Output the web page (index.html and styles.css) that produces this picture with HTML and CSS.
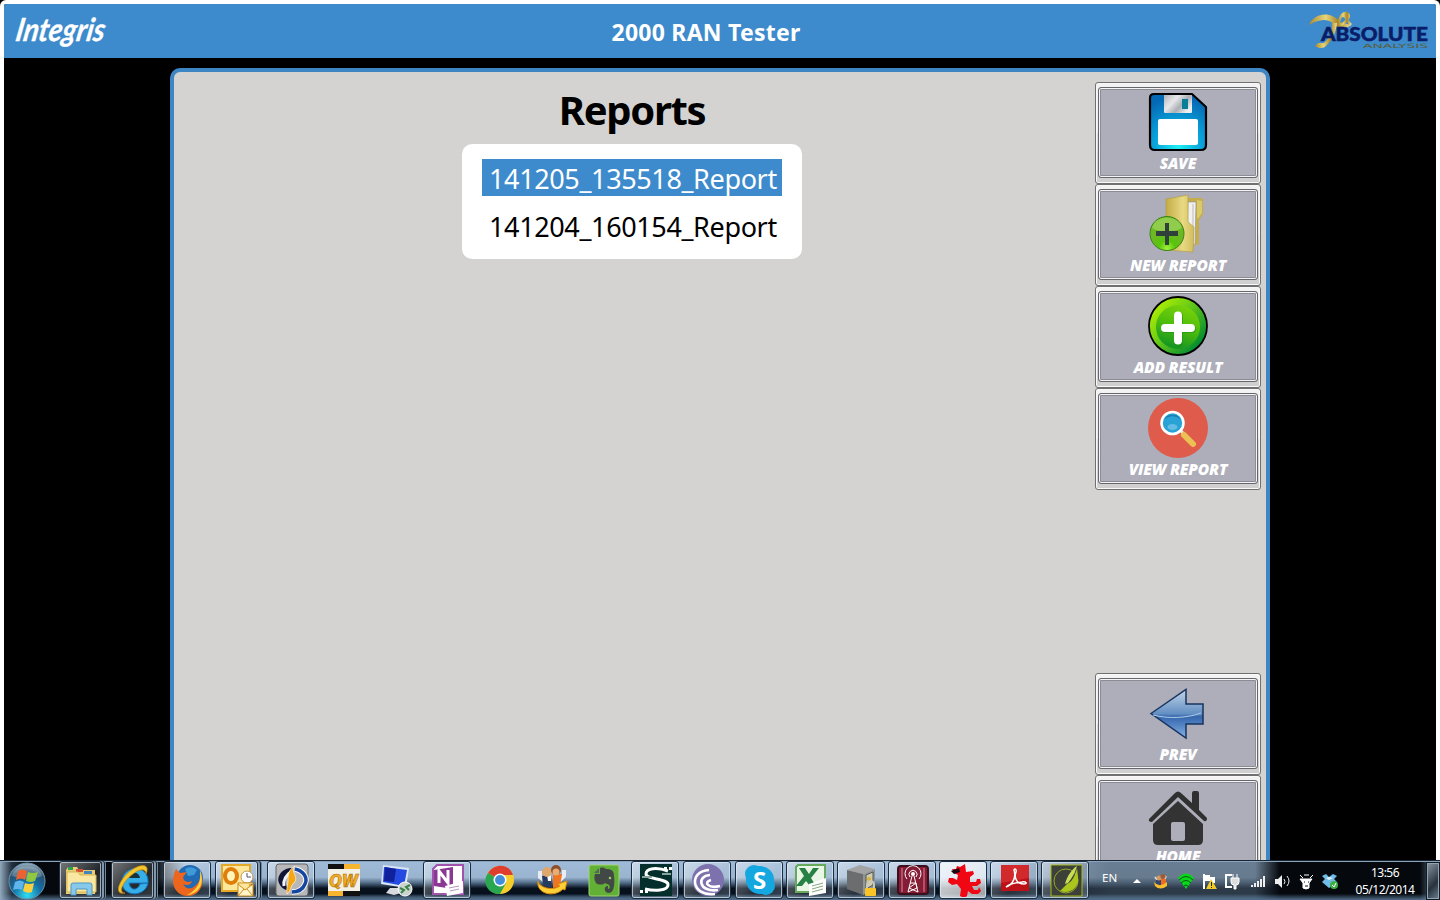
FILE: index.html
```html
<!DOCTYPE html>
<html lang="en">
<head>
<meta charset="utf-8">
<title>2000 RAN Tester</title>
<link rel="stylesheet" href="styles.css">
</head>
<body>
<div class="desktop">
<div class="app">
  <header class="header">
    <svg class="brand" width="120" height="54" viewBox="0 0 120 54"><text x="10" y="37" textLength="89" lengthAdjust="spacingAndGlyphs" transform="translate(7 0) skewX(-10)">Integris</text></svg>
    <h1 class="app-title">2000 RAN Tester</h1>
    <svg class="logo" width="122" height="42" viewBox="0 0 122 42">
      <defs><linearGradient id="gold"><stop offset="0" stop-color="#a98a2c"/><stop offset=".4" stop-color="#e6d47c"/><stop offset=".7" stop-color="#a88423"/><stop offset="1" stop-color="#efe09a"/></linearGradient></defs>
      <path d="M1 14C6 1 24 0 32 11l11 3c-6 5-13 4-17-1C19 6 9 9 1 14z" fill="url(#gold)"/>
      <path d="M31 14c-1-6 3-12 7-12 4 1 3 5 0 8-3 4-6 4-8 3M36 2c1 4 3 8 7 12M33 5l9 0" fill="none" stroke="url(#gold)" stroke-width="2.6"/>
      <path d="M29 12c-1 9-4 17-12 24-3 2-7 1-10-1l3-3h6c6-5 8-12 8-20z" fill="url(#gold)"/>
      <text class="logo-main" x="13" y="29.500" textLength="107" lengthAdjust="spacingAndGlyphs">ABSOLUTE</text>
      <text class="logo-sub" x="55" y="36.500" textLength="65" lengthAdjust="spacingAndGlyphs">ANALYSIS</text>
    </svg>
  </header>

  <main class="panel">
    <section class="content">
      <h2 class="page-title">Reports</h2>
      <ul class="report-list">
        <li class="report selected">141205_135518_Report</li>
        <li class="report">141204_160154_Report</li>
      </ul>
    </section>
    <nav class="sidebar">
      <div class="group">
        <button class="tool"><span class="tool-face">
          <svg width="60" height="60" viewBox="0 0 60 60">
            <defs><radialGradient id="disk" cx=".5" cy=".95" r=".9"><stop offset="0" stop-color="#1ff0f5"/><stop offset=".45" stop-color="#0aa5dc"/><stop offset="1" stop-color="#0568b4"/></radialGradient><linearGradient id="metal" x2="1" y2=".6"><stop offset="0" stop-color="#aeb4ba"/><stop offset=".4" stop-color="#e8e8ea"/><stop offset=".7" stop-color="#aaafb6"/><stop offset="1" stop-color="#eee"/></linearGradient></defs>
            <path d="M6 2h38l14 13v38q0 5-5 5H7q-5 0-5-5V6q0-4 4-4z" fill="url(#disk)" stroke="#000" stroke-width="2.200" stroke-linejoin="round"/>
            <path d="M16 3h28v17q0 1-1 1H17q-1 0-1-1z" fill="url(#metal)"/><path d="M34 7h6v10h-6z" fill="#087f96"/>
            <rect x="10" y="27" width="40" height="26" rx="2" fill="#fff"/>
          </svg><span class="label">SAVE</span></span></button>
        <button class="tool"><span class="tool-face">
          <svg width="60" height="60" viewBox="0 0 60 60">
            <defs><linearGradient id="folder" x2="1"><stop offset="0" stop-color="#c3ac45"/><stop offset=".6" stop-color="#e8d983"/><stop offset="1" stop-color="#d2bc5b"/></linearGradient><radialGradient id="lime" cy=".95"><stop offset="0" stop-color="#a5f43c"/><stop offset=".5" stop-color="#57c50a"/><stop offset="1" stop-color="#6cb824"/></radialGradient></defs>
            <path d="M38 4l15 0q2 0 2 3v13l-4 6v24l-12 4z" fill="#c5ad4b"/><path d="M40 8l8 0-1 42-8 4z" fill="#f1f1f0" stroke="#999" stroke-width=".7"/><path d="M45 10v40" stroke="#bbb"/><path d="M49 6l5 1v12l-4 6-1-2z" fill="#dcc968"/>
            <path d="M18 5l22-4v27l6 5-1 25-27-2z" fill="url(#folder)" stroke="#af983c" stroke-width=".6"/>
            <circle cx="19" cy="39.500" r="17" fill="url(#lime)" stroke="#398316"/><path d="M4 34c3-14 27-14 30 0-10 5-20 5-30 0z" fill="#c7ed8c" opacity=".4"/>
            <path d="M17 29h4v8h9v5h-9v9h-4v-9H8v-5h9z" fill="#30403a"/>
          </svg><span class="label">NEW REPORT</span></span></button>
        <button class="tool"><span class="tool-face">
          <svg width="60" height="60" viewBox="0 0 60 60">
            <defs><linearGradient id="green" x2=".9" y2=".8"><stop offset="0" stop-color="#c9fb00"/><stop offset=".45" stop-color="#76d212"/><stop offset="1" stop-color="#008b32"/></linearGradient><linearGradient id="green2" x1=".7" x2=".4" y2="1"><stop offset="0" stop-color="#7bd30a"/><stop offset=".5" stop-color="#4dbc0c"/><stop offset="1" stop-color="#129323"/></linearGradient></defs>
            <circle cx="30" cy="30" r="29" fill="url(#green)" stroke="#000" stroke-width="1.800"/><circle cx="30" cy="31" r="22" fill="url(#green2)"/><path d="M30 19v27M17 32h26" stroke="#158b18" opacity=".5" stroke-width="8" stroke-linecap="round" transform="translate(1 1)"/><path d="M30 19.500v25M17 32h26" stroke="#fff" stroke-width="8" stroke-linecap="round"/>
          </svg><span class="label">ADD RESULT</span></span></button>
        <button class="tool"><span class="tool-face">
          <svg width="60" height="60" viewBox="0 0 60 60">
            <circle cx="30" cy="30" r="30" fill="#df5b4b"/><path d="M32 32l5 5" stroke="#e8e8e8" stroke-width="3"/><path d="M36 37l9 9" stroke="#ecc153" stroke-width="6" stroke-linecap="round"/>
            <circle cx="24.500" cy="25" r="11" fill="#29a3d6" stroke="#fff" stroke-width="2.600"/><path d="M16 22a9 8 0 0117 0c-5-5-12-5-17 0" fill="#177fb2"/><ellipse cx="24.500" cy="29" rx="5" ry="3" fill="#64bce2"/>
          </svg><span class="label">VIEW REPORT</span></span></button>
      </div>
      <div class="group">
        <button class="tool"><span class="tool-face">
          <svg width="60" height="60" viewBox="0 -5 60 60">
            <defs><linearGradient id="arrow" x2="0" y2="1"><stop offset="0" stop-color="#c3d5e7"/><stop offset=".5" stop-color="#638fc3"/><stop offset=".56" stop-color="#3566ad"/><stop offset="1" stop-color="#84b0e4"/></linearGradient></defs>
            <path d="M3 25.500L38 1.500v14.500h17v20H38v14z" fill="url(#arrow)" stroke="#17345f" stroke-width="1.500"/><path d="M5 27c15 4 35 3 48-2" fill="none" stroke="#b2cce7"/>
          </svg><span class="label">PREV</span></span></button>
        <button class="tool"><span class="tool-face">
          <svg width="60" height="60" viewBox="0 -5 60 60">
            <path d="M1 29L27 3c2-2 4-2 6 0l11 10V3q0-2 2-2h3q2 0 2 2v17l8 8q0 4-3 3L30 7 4 32q-4 0-3-3z" fill="#303030"/><path fill-rule="evenodd" d="M5 34L30 11l25 23v16q0 5-5 5H10q-5 0-5-5zM25 32q-2 0-2 2v15q0 2 2 2h10q2 0 2-2V34q0-2-2-2z" fill="#333"/>
          </svg><span class="label">HOME</span></span></button>
      </div>
    </nav>
  </main>
</div>

<footer class="taskbar">
  <svg class="orb" width="38" height="38" viewBox="0 0 38 38">
    <defs><radialGradient id="orb" cy=".9" r=".9"><stop offset="0" stop-color="#32ddf2"/><stop offset=".45" stop-color="#126ea5"/><stop offset=".75" stop-color="#28506f"/><stop offset="1" stop-color="#9eb6c5"/></radialGradient></defs>
    <circle cx="19" cy="19" r="18" fill="url(#orb)" stroke="#6c92ab"/><path d="M4 14C7 1 31 1 34 14 25 18 14 17 4 14z" fill="#fff" opacity=".25"/>
    <path d="M10 9q4-3 9 0l-2 9q-4-3-9 0z" fill="#ea6331"/><path d="M20 10q4 2 10 0l-3 9q-4 2-9 0z" fill="#8fc73e"/><path d="M7 20q5-3 9 0l-2 8q-4-2-9 0z" fill="#60b5ec"/><path d="M17 21q4 2 9 0l-2 9q-4 2-9-1z" fill="#fbcf3d"/>
  </svg>
  <div class="tasks">
    <span class="task open stacked"><svg width="34" height="34" viewBox="0 0 34 34"><path d="M2 7l2-3h9l2 3h16v24H2z" fill="#e9cd72"/><path d="M4 4h5v3H4z" fill="#2da34c"/><path d="M12 6h7v3h-7z" fill="#d85036"/><path d="M20 8h8v3h-8z" fill="#4384bd"/><path d="M3 9h11l2 3h16v17H3z" fill="#f9e7a2" stroke="#d5b755"/><path d="M7 32V22q0-2 2-2h17q2 0 2 2v10h-5v-6H12v6z" fill="#87c9ea" stroke="#4e99c4"/></svg></span>
    <span class="task open stacked"><svg width="34" height="34" viewBox="0 0 34 34"><path d="M32 20c-3 15-26 14-26-1C6 2 33 0 32 20H13c1 8 9 8 11 1z" fill="#36aee8" stroke="#1479c2"/><path d="M13 15h11c-1-7-10-7-11 0z" fill="#17323d"/><path d="M9 30C-4 33 4 14 17 6 27 0 34 2 30 11c0-6-7-5-13 0C8 17 1 30 9 30z" fill="#f5c52e" stroke="#ba8610" stroke-width=".7"/></svg></span>
    <span class="task open"><svg width="34" height="34" viewBox="0 0 34 34"><circle cx="19" cy="15" r="13" fill="#236ab4"/><path d="M14 6q6-4 12 1l-3 5-6 1z" fill="#3d9bd8"/><path d="M5 6l4 4 7-1-4 5q1 7 9 4-2 6-9 3 5 8 12 2 7-6 5-14c6 11 0 24-12 24C4 33-2 20 5 6z" fill="#ec671d"/><path d="M29 7c5 12 0 24-13 25 12-6 14-14 13-25z" fill="#ffd13e"/></svg></span>
    <span class="task open stacked"><svg width="34" height="34" viewBox="0 0 34 34"><path d="M2 2h28v26H2z" fill="#fce79b" stroke="#e5a927" stroke-width="2"/><ellipse cx="11" cy="13" rx="6" ry="7" fill="#fff5bb" stroke="#df7e0b" stroke-width="4"/><circle cx="27" cy="14" r="6" fill="#fff" stroke="#bd9a54"/><path d="M27 10v4h4" fill="none" stroke="#556"/><path d="M18 20h15v13H18zM18 21l7 6 8-6M18 33l6-7m9 7l-6-7" fill="#fff4ca" stroke="#ce8b18"/></svg></span>
    <span class="task open"><svg width="34" height="34" viewBox="0 0 34 34"><rect x="1" y="1" width="32" height="32" rx="3" fill="#b8b8ba" stroke="#666"/><path d="M18 5C8 4 1 13 4 20c2 5 6 7 10 8 -5-8-5-15 4-23z" fill="#101536"/><path d="M17 8c-6 4-9 9-8 15" fill="none" stroke="#f4f4f4" stroke-width="3"/><path d="M20 6c9 2 13 9 10 15-2 5-7 8-13 8" fill="none" stroke="#fff" stroke-width="5.500"/><path d="M20 6c9 2 13 9 10 15-2 5-7 8-13 8" fill="none" stroke="#1547a0" stroke-width="3.500"/><path d="M20 3c-6 5 5 11-1 17-4 3-2 7-7 11-1-6 1-9 1-13 0-7 1-12 7-15z" fill="#f5a613" stroke="#fff" stroke-width=".6"/></svg></span>
    <span class="task"><svg width="34" height="34" viewBox="0 0 34 34"><path d="M1 1h32v32H1z" fill="#f3f0e6"/><path d="M1 1h16v5H1zM16 28h17v5H16z" fill="#111"/><path d="M17 1h16v5H17zM1 28h15v5H1z" fill="#f8b52d"/><text class="qw" x="2" y="24" textLength="29" lengthAdjust="spacingAndGlyphs">QW</text></svg></span>
    <span class="task"><svg width="34" height="34" viewBox="0 0 34 34"><path d="M4 2l26 3-3 20L2 21z" fill="#d9e5f5"/><path d="M5 4l23 3-3 16L4 19z" fill="#244ae1"/><path d="M6 4l11 2-2 13-10-1z" fill="#11219b"/><path d="M11 25h9l2 5-7 2-8-2z" fill="#d8d9df"/><circle cx="26" cy="26" r="7" fill="#ccd3cf" stroke="#fff"/><path d="M21 25l4 2-3 3m9-8l-4 2 3 3" fill="none" stroke="#388347" stroke-width="2"/></svg></span>
    <span class="task open"><svg width="34" height="34" viewBox="0 0 34 34"><path d="M6 2h26v29H2V6z" fill="#fff" stroke="#9f53aa" stroke-width="2"/><path d="M3 7l19-3v22L3 23z" fill="#8a3894"/><path d="M8 20V8l9 12V7" fill="none" stroke="#fff" stroke-width="3"/><path d="M14 23l18-5v12l-16 3z" fill="#fff"/><path d="M18 25l10-2m-9 5l9-2" stroke="#b896bc"/></svg></span>
    <span class="task"><svg width="34" height="34" viewBox="0 0 34 34"><circle cx="17" cy="17" r="14" fill="#f6ce2c"/><path d="M17 17L5 10c7-11 22-9 25 2H17z" fill="#df3d2e"/><path d="M5 10c-7 10 1 22 12 21l6-11-6-3z" fill="#2ba650"/><circle cx="17" cy="17" r="6.500" fill="#fff"/><circle cx="17" cy="17" r="5" fill="#438edb"/></svg></span>
    <span class="task"><svg width="34" height="34" viewBox="0 0 34 34"><path d="M5 8v6l5 4M29 7v6l-5 5" fill="none" stroke="#e9edf2" stroke-width="4"/><path d="M7 13l9-2 1 14-9-2z" fill="#263b60"/><path d="M18 11l9 0-2 13-7 1z" fill="#f07523"/><path d="M12 12h4v6h-3z" fill="#fff"/><circle cx="12" cy="9" r="5" fill="#dfa76b"/><circle cx="21" cy="7" r="5" fill="#8d4e2b"/><circle cx="21" cy="9" r="3.500" fill="#e7ad75"/><path d="M3 18c1 7 15 10 22 5l-2-2 9-3-2 9-2-1c-9 9-27 5-25-8z" fill="#ffcf37" stroke="#d98b09"/></svg></span>
    <span class="task"><svg width="34" height="34" viewBox="0 0 34 34"><rect x="2" y="2" width="30" height="31" rx="2" fill="#62b035" stroke="#a2d577"/><path d="M8 11h5V5c3-1 5 0 6 1 5 0 8 1 8 7 1 8 0 17-5 17s-6-7-1-7v3c3 0 2-5-1-5l-2-1c-2 2-7 2-9 0-2-3-2-6-1-9z" fill="#424846"/><path d="M7 10l5-5v5z" fill="#596360"/><circle cx="23" cy="15" r="1.300" fill="#9bc66a"/></svg></span>
    <span class="task open"><svg width="34" height="34" viewBox="0 0 34 34"><path d="M1 1h32v32H1z" fill="#042e2b"/><path d="M29 8C18 4 7 5 7 11c0 6 23 4 22 11 0 6-14 6-23 4" fill="none" stroke="#fff" stroke-width="3"/><path d="M3 14h10m10-3h9" stroke="#86a39e" stroke-width="2"/><path d="M25 4h3v3h-3zm5 0h3v3h-3zM1 27h3v3H1zm5 0h3v3H6z" fill="#fff"/></svg></span>
    <span class="task open"><svg width="34" height="34" viewBox="0 0 34 34"><circle cx="17" cy="17" r="16" fill="#7e72ae"/><g fill="none" stroke="#fff" stroke-width="2.600"><path d="M18 7C-3 8 0 34 24 31"/><path d="M19 12C5 13 8 30 27 27"/><path d="M20 17c-8 2-3 9 9 6"/></g></svg></span>
    <span class="task open w51"><svg width="34" height="34" viewBox="0 0 34 34"><circle cx="11" cy="11" r="9" fill="#15a7e0"/><circle cx="17" cy="17" r="14" fill="#15a7e0"/><circle cx="23" cy="23" r="9" fill="#15a7e0"/><text class="skype" x="10" y="26">S</text></svg></span>
    <span class="task open w51"><svg width="34" height="34" viewBox="0 0 34 34"><path d="M4 2h27v27H2V4z" fill="#e9f5e5" stroke="#64a95c" stroke-width="2"/><path d="M5 5h6l4 6 4-6h6l-8 10 5 8h-6l-4-5-4 5H2l8-10z" fill="#278044"/><path d="M15 21l17-6v15l-17 3z" fill="#fff"/><path d="M18 23l11-3m-11 6l11-3m-11 6l11-3" stroke="#83aa80"/></svg></span>
    <span class="task open w51"><svg width="34" height="34" viewBox="0 0 34 34"><path d="M2 7l13-5 15 4-12 5z" fill="#a3a3a3"/><path d="M2 7l16 4v21L2 26z" fill="#6c6d6e"/><path d="M18 11l12-5v20l-12 6z" fill="#929596"/><path d="M21 12l7-3v13l-7 4z" fill="#d0ccae" stroke="#555"/><circle cx="24" cy="16" r="2" fill="#d9b334"/><path d="M22 25v-3c0-5 7-5 7 0v3" fill="none" stroke="#c9c9b9" stroke-width="2"/><rect x="20" y="25" width="11" height="8" rx="1" fill="#fac425"/></svg></span>
    <span class="task open w51"><svg width="34" height="34" viewBox="0 0 34 34"><rect x="2" y="3" width="30" height="28" rx="3" fill="#851c35" stroke="#3d0e1b" stroke-width="2"/><path d="M6 5v24M28 5v24" stroke="#b24f69" stroke-width="2"/><g fill="none" stroke="#fff"><path d="M16 13l-4 16m6-16l4 16M14 20h6l-7 5 9 4m-2-9l1 5-9 4M14 14a4 4 0 116 0M11 16a8 8 0 1112 0"/></g><circle cx="17" cy="11" r="2" fill="#fff"/></svg></span>
    <span class="task open active w51"><svg width="34" height="34" viewBox="0 0 34 34"><path d="M9 6l1-3 3 1 5-3 1 8 7-1 1 3-4 3v5l6 0 1-3 3 0 1 4-4 3-5 0 2 4 4 0 1-3 2 4-3 3-6 0-4-3-1 5-3 2-4-2 1-7-4-5-5 1-4-3 1-4 4 0 4 2 1-5-4-2-2-4z" fill="#f00713"/><path d="M4 8l8-3 1 4-6 2z" fill="#180a14"/></svg></span>
    <span class="task open w51"><svg width="34" height="34" viewBox="0 0 34 34"><path d="M3 2h28v26H3z" fill="#bc1117"/><path d="M3 2h28v13L3 20z" fill="#d22a2c"/><path d="M8 24c8-3 10-11 8-17 0-2 3-1 2 2-2 5 0 12 8 12 4 0 2-3-2-2-8 1-14 3-16 5z" fill="none" stroke="#fff" stroke-width="1.500"/></svg></span>
    <span class="task open w51"><svg width="34" height="34" viewBox="0 0 34 34"><path d="M2 2h31v31H2z" fill="#3c4039" stroke="#a5b91d"/><circle cx="17" cy="18" r="12" fill="none" stroke="#93a82a"/><path d="M29 14c2 10-8 18-18 14l7-7c5-2 8-8 10-16z" fill="#acc51c"/><path d="M28 3c-5 3-10 10-12 18l3-1c4-5 7-10 9-17z" fill="#cbdc56"/></svg></span>
  </div>
  <div class="tray">
    <span class="lang">EN</span>
    <svg class="tray-icons" width="210" height="20" viewBox="0 0 210 20">
      <path d="M5 12l4-4 4 4z" fill="#fff"/>
      <path d="M27 6l4 5m7-6l-3 6" stroke="#ddd" stroke-width="2"/><path d="M28 9h5v5h-5z" fill="#34466c"/><path d="M33 8h5v6h-5z" fill="#ec6c25"/><circle cx="31" cy="7" r="2.500" fill="#d09a65"/><circle cx="35" cy="5.500" r="2.500" fill="#a05d34"/><path d="M26 11q4 5 10 2l3-2v4q-7 5-12 0z" fill="#f9bd2b"/>
      <path d="M50 7q8-9 16 0l-8 11z" fill="#08d71b"/><path d="M51 9q7-7 14 0m-12 3q5-5 10 0m-7 3q2-2 4 0" fill="none" stroke="#075513"/>
      <path d="M76 3v15" stroke="#fff" stroke-width="2"/><path d="M77 4h5v2h5v6h-5v-2h-5z" fill="#fff"/><path d="M78 18l5-10 6 10z" fill="#f1cb26"/><path d="M83.500 11v4m0 1v1" stroke="#222"/>
      <path d="M104 4h-6v12h6" fill="none" stroke="#fff" stroke-width="2"/><path d="M103 7h8v4q0 3-3 3v4h-2v-4q-3 0-3-3zM105 3v4m4-4v4" fill="#ddd" stroke="#fff"/>
      <path d="M124 16v-2m3 2v-4m3 4v-6m3 6V8m3 8V5" stroke="#eee" stroke-width="2"/>
      <path d="M147 8h3l4-4v13l-4-4h-3z" fill="#eee"/><path d="M156 8q2 3 0 5m3-8q4 5 0 10" fill="none" stroke="#eee"/>
      <path d="M172 8h12l-3 4v5q-3 2-6 0v-5zM172 4l3 3m10-3l-3 3M176 4h5" fill="#fff" stroke="#fff"/><path d="M176 11h1m3 0h1M177 15h3" stroke="#111"/>
      <path d="M194 5l4-2 3 3 4-3 4 2-3 3 3 3-8 6-7-6 3-3z" fill="#70bce9"/><path d="M198 7l3 2 4-2-4-1z" fill="#e6f5ff"/><circle cx="206" cy="14" r="4" fill="#3fae49"/><path d="M204 14l2 2 2-4" fill="none" stroke="#fff"/>
    </svg>
    <div class="clock"><span>13:56</span><span>05/12/2014</span></div>
  </div>
  <span class="show-desktop"></span>
</footer>
</div>
</body>
</html>
```
FILE: styles.css
```css
* { box-sizing: border-box; }
body { margin: 0; background: #000; font-family: "Noto Sans", "Open Sans", sans-serif; overflow: hidden; }
.desktop { width: 1440px; height: 900px; overflow: hidden; display: grid; grid-template-rows: 860px 40px; }
.app { border: 4px solid #fff; border-bottom: 0; border-radius: 6px 6px 0 0; background: #000; overflow: hidden; }
.header { height: 54px; background: #3d8bcc; display: grid; grid-template-columns: 170px 1fr 170px; align-items: center; }
.brand { overflow: visible; }
.brand text { font: italic 700 32px Lato, sans-serif; fill: #fff; stroke: #fff; stroke-width: .3px; }
.app-title { margin: 0; text-align: center; padding-right: 28px; color: #fff; font: 700 23px/30px "Noto Sans", sans-serif; letter-spacing: .25px; padding-top: 2px; }
.logo { justify-self: end; margin: 1px 6px 0 0; overflow: visible; }
.logo-main { font: 900 19px "Lato", sans-serif; fill: #0a1d68; stroke: #0a1d68; stroke-width: .5px; }
.logo-sub { font: 400 6px "DejaVu Sans", sans-serif; fill: #5b5c30; }
.panel { width: 1100px; height: 850px; margin: 10px auto 0; border: 4px solid #3d86c3; border-radius: 10px; background: #d4d3d1; display: flex; }
.content { width: 916px; display: flex; flex-direction: column; align-items: center; padding-top: 11px; }
.page-title { margin: 0; font: 700 40px/54px "Noto Sans", sans-serif; letter-spacing: -1.3px; }
.report-list { list-style: none; margin: 7px 0 0; padding: 15px 20px; width: 340px; height: 115px; border-radius: 10px; background: #fff; display: flex; flex-direction: column; gap: 11px; }
.report { height: 37px; padding-left: 7px; font-size: 27px; line-height: 40px; letter-spacing: -.37px; white-space: nowrap; }
.selected { background: #3d8bcc; color: #fff; }
.sidebar { width: 166px; margin-left: 5px; padding-top: 10px; display: flex; flex-direction: column; gap: 183px; }
.group { display: flex; flex-direction: column; }
.tool { width: 166px; height: 102px; padding: 4px 2px 5px; border: 1px solid #707070; border-radius: 3px; background: linear-gradient(#f3f3f3 0%, #ebebeb 50%, #ddd 50%, #cfcfcf 100%); box-shadow: inset 0 0 0 1px #f8f8f8; display: flex; }
.tool-face { flex: 1; border: 1px solid #66666c; border-radius: 3px; box-shadow: inset 0 0 0 1px #f4f4f4, inset 0 0 0 2px #8b8b94; background: #aeaeba; display: flex; flex-direction: column; align-items: center; padding-top: 4px; }
.tool-face svg { display: block; }
.label { margin-top: 0; font: italic 800 15.5px/22px "Open Sans", sans-serif; letter-spacing: -.2px; color: #fff; white-space: nowrap; }
.taskbar { display: flex; align-items: center; border-top: 1px solid #172434; box-shadow: inset 0 1px #8da5bb;
  background: linear-gradient(90deg, #91a9bd 0, rgba(60,85,108,.5) 12px, transparent 28px, transparent 1420px, #7994aa 1440px), linear-gradient(transparent 84%, #506d89 100%), linear-gradient(90deg, #05090e 0, #05090e 155px, transparent 185px, transparent 1255px, #05090e 1280px), linear-gradient(90deg, transparent 1000px, rgba(70,85,100,.6) 1110px), linear-gradient(#9fbbd9 0, #9ab4cf 42%, #56718c 55%, #07111e 70%, #07111e 85%, #506d89 100%); }
.orb { margin: 0 0 0 8px; }
.tasks { margin-left: 13px; display: flex; height: 40px; }
.task { width: 48px; height: 38px; margin: 0 4px 0 0; padding-left: 2px; border: 1px solid transparent; border-radius: 3px; display: flex; align-items: center; justify-content: center; }
.task.w51 { margin-right: 3px; }
.open { border-color: #1c2d40; box-shadow: inset 0 0 0 1px rgba(225,236,247,.65); background: linear-gradient(135deg, rgba(255,255,255,.45), rgba(255,255,255,.12) 60%, rgba(190,215,240,.25)); }
.stacked { width: 43px; margin-right: 9px; padding-left: 0; box-shadow: inset 0 0 0 1px rgba(225,236,247,.65), 2px 0 #8296a9, 3px 0 #16202c, 4px 0 #70869a; }
.active { background: linear-gradient(135deg, rgba(255,255,255,.85), rgba(255,255,255,.6)); }
.qw { font: italic 900 19px Roboto, sans-serif; fill: #f3ac23; stroke: #a66d12; stroke-width: .5px; }
.skype { font: 700 24px "Open Sans", sans-serif; fill: #fff; }
.tray { margin-left: 10px; display: flex; align-items: center; color: #fff; }
.lang { width: 16px; font-size: 11.5px; line-height: 16px; margin-top: -6px; }
.tray-icons { margin-left: 10px; }
.clock { width: 80px; margin-left: 7px; display: flex; flex-direction: column; align-items: center; font-size: 12px; line-height: 17px; letter-spacing: -.5px; }
.show-desktop { width: 14px; height: 38px; margin-left: auto; border: 1px solid #101b26; box-shadow: inset 0 0 0 1px #91a2b0; background: linear-gradient(135deg, #8a98a5, #27323d 60%, #6c8294); }
```
